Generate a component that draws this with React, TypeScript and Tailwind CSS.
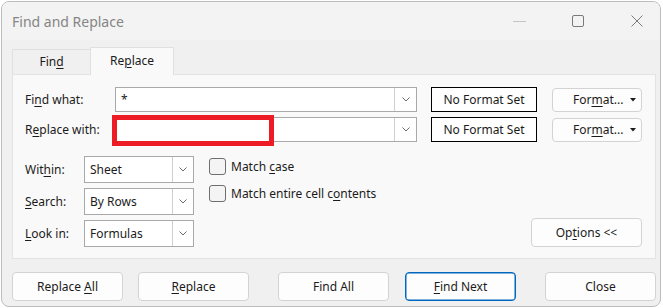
import React from "react";

const font = { fontFamily: '"Noto Sans", "Open Sans", Arial, sans-serif' };

function U({ children }: { children: React.ReactNode }) {
  return <span className="underline decoration-1 underline-offset-[2px]">{children}</span>;
}

function Chevron() {
  return (
    <svg width="8" height="5" viewBox="0 0 8 5" fill="none">
      <path d="M0.5 0.5 L4 4 L7.5 0.5" stroke="#6b6b6b" strokeWidth="1" />
    </svg>
  );
}

function ComboInput({ value, children }: { value?: string; children?: React.ReactNode }) {
  return (
    <div className="relative flex h-[25px] w-[302px] items-stretch border border-[#a9a9a9] bg-white">
      <div className="flex flex-1 items-center pl-[5px] text-[12px] leading-none">{value}</div>
      <div className="flex w-[22px] items-center justify-center border-l border-[#cfcfcf] bg-white">
        <Chevron />
      </div>
      {children}
    </div>
  );
}

function NoFormat() {
  return (
    <div className="ml-[14px] flex h-[25px] w-[106px] items-center justify-center border border-black bg-white text-[12px]">
      No Format Set
    </div>
  );
}

function FormatBtn() {
  return (
    <div className="ml-[15px] flex h-[24px] w-[90px] items-center rounded-[4px] border border-[#d3d3d3] bg-[#fdfdfd] pl-[20px] text-[12px]">
      <span>
        For<U>m</U>at...
      </span>
      <svg className="ml-auto mr-[5px]" width="6" height="4" viewBox="0 0 6 4">
        <polygon points="0,0 6,0 3,3.5" fill="#1b1b1b" />
      </svg>
    </div>
  );
}

function Select({ value }: { value: string }) {
  return (
    <div className="flex h-[27px] w-[110px] items-stretch border border-[#a9a9a9] bg-white">
      <div className="flex flex-1 items-center pl-[5px] text-[12px]">{value}</div>
      <div className="flex w-[21px] items-center justify-center border-l border-[#cfcfcf]">
        <Chevron />
      </div>
    </div>
  );
}

function Check({ children }: { children: React.ReactNode }) {
  return (
    <div className="flex h-[17px] items-center">
      <div className="h-[17px] w-[17px] rounded-[3px] border border-[#6f6f6f] bg-[#f4f4f4]" />
      <span className="ml-[5px] text-[12px]">{children}</span>
    </div>
  );
}

function Btn({ children, primary, className }: { children: React.ReactNode; primary?: boolean; className?: string }) {
  return (
    <div
      className={
        "flex h-[29px] w-[111px] items-center justify-center rounded-[4px] text-[12px] " +
        (primary
          ? "border border-[#0067c0] bg-[#fdfdfd] shadow-[inset_0_0_0_0.5px_#0067c0] "
          : "border border-[#d3d3d3] bg-[#fdfdfd] ") +
        (className ?? "")
      }
    >
      {children}
    </div>
  );
}

export default function App() {
  return (
    <div className="h-[308px] w-[663px] overflow-hidden bg-white pl-[1px] pr-[2px] pt-[1px] text-[#1b1b1b]" style={font}>
      <div className="flex h-[306px] flex-col overflow-hidden rounded-[8px] border border-[#bcbcbc] bg-[#f0f0f0]">
        {/* Title bar */}
        <div className="flex h-[38px] items-center bg-[#f3f3f3] pl-[10px] pr-[17px]">
          <span className="text-[14px] text-[#858585]">Find and Replace</span>
          <div className="ml-auto flex items-center">
            <svg width="13" height="12" viewBox="0 0 13 12">
              <line x1="0" y1="6.5" x2="13" y2="6.5" stroke="#c4c4c4" strokeWidth="1" />
            </svg>
            <svg className="ml-[46px]" width="12" height="12" viewBox="0 0 12 12" fill="none">
              <rect x="0.5" y="0.5" width="11" height="11" rx="1.5" stroke="#7a7a7a" strokeWidth="1" />
            </svg>
            <svg className="ml-[47px]" width="12" height="12" viewBox="0 0 12 12" fill="none">
              <path d="M0.5 0.5 L11.5 11.5 M11.5 0.5 L0.5 11.5" stroke="#7a7a7a" strokeWidth="1" />
            </svg>
          </div>
        </div>

        {/* Body */}
        <div className="flex flex-col pl-[10px] pr-[4px] pt-[7px]">
          {/* Tabs */}
          <div className="flex h-[27px] items-end">
            <div className="flex h-[25px] w-[78px] items-center justify-center border-l border-t border-[#e0e0e0] bg-[#f0f0f0] text-[12px]">
              <span>
                Fin<U>d</U>
              </span>
            </div>
            <div className="relative z-10 -mb-[1px] flex h-[28px] w-[84px] items-center justify-center border-l border-r border-t border-[#e0e0e0] bg-[#f9f9f9] pb-[1px] text-[12px]">
              <span>
                Re<U>p</U>lace
              </span>
            </div>
          </div>

          {/* Panel */}
          <div className="flex h-[185px] flex-col border border-[#e3e3e3] bg-[#f9f9f9] pl-[12px] pr-[13px] pt-[12px]">
            <div className="flex h-[25px] items-center">
              <div className="w-[90px] text-[12px]">
                Fi<U>n</U>d what:
              </div>
              <ComboInput value="*" />
              <NoFormat />
              <FormatBtn />
            </div>
            <div className="mt-[5px] flex h-[25px] items-center">
              <div className="w-[90px] text-[12px]">
                R<U>e</U>place with:
              </div>
              <ComboInput>
                <div className="absolute left-[-4px] top-[-3px] h-[31px] w-[162px] border-[5px] border-[#ed1c24]" />
              </ComboInput>
              <NoFormat />
              <FormatBtn />
            </div>

            <div className="mt-[14px] flex items-end">
              <div className="flex flex-col gap-[5px]">
                <div className="flex items-center">
                  <div className="w-[59px] text-[12px]">
                    Wit<U>h</U>in:
                  </div>
                  <Select value="Sheet" />
                </div>
                <div className="flex items-center">
                  <div className="w-[59px] text-[12px]">
                    <U>S</U>earch:
                  </div>
                  <Select value="By Rows" />
                </div>
                <div className="flex items-center">
                  <div className="w-[59px] text-[12px]">
                    <U>L</U>ook in:
                  </div>
                  <Select value="Formulas" />
                </div>
              </div>
              <div className="ml-[15px] flex flex-col gap-[10px] self-start pt-[2px]">
                <Check>
                  Match <U>c</U>ase
                </Check>
                <Check>
                  Match entire cell c<U>o</U>ntents
                </Check>
              </div>
              <div className="ml-auto">
                <Btn>
                  <span>
                    Op<U>t</U>ions &lt;&lt;
                  </span>
                </Btn>
              </div>
            </div>
          </div>

          {/* Bottom buttons */}
          <div className="mt-[13px] flex items-center">
            <Btn>
              <span>
                Replace <U>A</U>ll
              </span>
            </Btn>
            <Btn className="ml-[15px]">
              <span>
                <U>R</U>eplace
              </span>
            </Btn>
            <Btn className="ml-[29px]">Find All</Btn>
            <Btn primary className="ml-[16px]">
              <span>
                <U>F</U>ind Next
              </span>
            </Btn>
            <Btn className="ml-[29px]">Close</Btn>
          </div>
        </div>
      </div>
    </div>
  );
}
